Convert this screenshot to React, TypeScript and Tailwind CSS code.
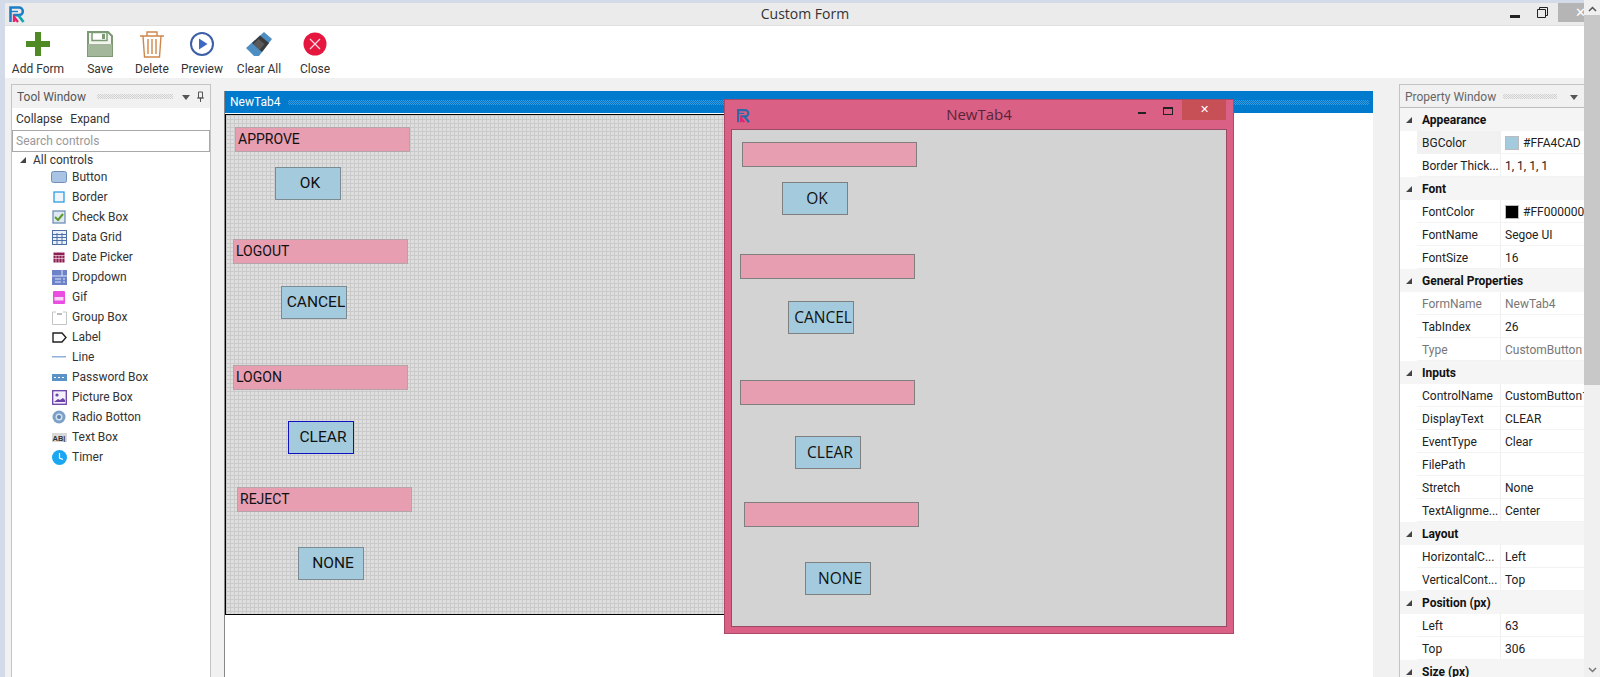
import React from "react";

function Logo({ size = 18, dark }: { size?: number; dark?: boolean }) {
  const blue = dark ? "#2a6aa8" : "#1e7fc6";
  return (
    <svg width={size} height={size} viewBox="0 0 18 18" fill="none" className="shrink-0">
      <path d="M2.500 17V2.500h8.500a3.800 3.800 0 0 1 0 7.600H5.500" stroke={blue} strokeWidth="2.600" />
      <path d="M2 6.500h8" stroke={blue} strokeWidth="1.400" />
      <path d="M6 17v-5l4 5" stroke="#e8236e" strokeWidth="2.400" />
      <path d="M10.500 10.500l5 6.500" stroke={dark ? "#2a6aa8" : "#14a5ad"} strokeWidth="2.800" />
    </svg>
  );
}

function ToolButton({ label, children, w }: { label: string; children: React.ReactNode; w: string }) {
  return (
    <div className={`flex flex-col items-center ${w}`}>
      <div className="h-[32px] flex items-center justify-center">{children}</div>
      <span className="text-[12px] leading-[16px] text-[#333] mt-[1px] whitespace-nowrap font-['Roboto',sans-serif]">{label}</span>
    </div>
  );
}

const controls: [string, React.ReactNode][] = [
  ["Button", <svg width="16" height="14" viewBox="0 0 16 14"><rect x="0.5" y="1.5" width="15" height="11" rx="2" fill="#a9c3e4" stroke="#6f8fb5" /></svg>],
  ["Border", <svg width="14" height="14" viewBox="0 0 14 14"><rect x="2" y="2" width="10" height="10" fill="#eef6fc" stroke="#2f9be8" strokeWidth="1.3" /></svg>],
  ["Check Box", <svg width="14" height="14" viewBox="0 0 14 14"><rect x="1" y="1" width="12" height="12" fill="#dfe8f2" stroke="#6f8fb5" strokeWidth="1.3" /><path d="M3 7l3 3 5-6" stroke="#5b9a2a" strokeWidth="2" fill="none" /></svg>],
  ["Data Grid", <svg width="15" height="15" viewBox="0 0 15 15"><rect x="0.5" y="0.5" width="14" height="14" fill="#eaf0f8" stroke="#4d6fa8" /><path d="M0 4.5h15M0 7.5h15M0 10.5h15M5 3v12M10 3v12" stroke="#4d6fa8" strokeWidth="1" /></svg>],
  ["Date Picker", <svg width="12" height="12" viewBox="0 0 12 12"><rect x="0.5" y="1.5" width="11" height="10" fill="#8c1f52" /><path d="M0 4.5h12M3 4v8M6 4v8M9 4v8M0 7.5h12M3 0v2M9 0v2" stroke="#f3d6e2" strokeWidth="0.7" /></svg>],
  ["Dropdown", <svg width="15" height="15" viewBox="0 0 15 15"><rect width="15" height="15" fill="#6d83c9" /><path d="M10 0v6M0 6h15M3 9h6M3 12h6M11 9h2M11 12h2" stroke="#dfe6f8" strokeWidth="1" /></svg>],
  ["Gif", <svg width="12" height="13" viewBox="0 0 12 13"><rect width="12" height="13" rx="1" fill="#ea4ee0" /><rect x="1.500" y="6" width="9" height="3.500" fill="#fbd5f7" /></svg>],
  ["Group Box", <svg width="15" height="15" viewBox="0 0 15 15" fill="none"><path d="M4 2H0.5v12.5h14V2H11" stroke="#c4c4c4" /><path d="M5 4h5" stroke="#aaa" strokeWidth="1.6" /></svg>],
  ["Label", <svg width="15" height="11" viewBox="0 0 15 11" fill="none"><path d="M1 1h9l4 4.500-4 4.500H1z" stroke="#222" strokeWidth="1.4" /></svg>],
  ["Line", <svg width="14" height="2" viewBox="0 0 14 2"><rect width="14" height="1.500" fill="#8fb0da" /></svg>],
  ["Password Box", <svg width="15" height="7" viewBox="0 0 15 7"><rect width="15" height="7" fill="#5c93c7" /><path d="M2 3.500h2M6 3.500h2M10 3.500h2" stroke="#fff" /></svg>],
  ["Picture Box", <svg width="15" height="15" viewBox="0 0 15 15"><rect x="0.7" y="0.700" width="13.6" height="13.6" fill="#f3f0fa" stroke="#6a42a8" strokeWidth="1.3" /><circle cx="5" cy="5" r="1.600" fill="#6a42a8" /><path d="M2 12l4-3 2 1 3-2 2 2v2z" fill="#6a42a8" /></svg>],
  ["Radio Botton", <svg width="14" height="14" viewBox="0 0 14 14"><circle cx="7" cy="7" r="6.500" fill="#7ba1c8" /><circle cx="7" cy="7" r="3.500" fill="#d3e0ee" /><circle cx="7" cy="7" r="2" fill="#5d86b3" /></svg>],
  ["Text Box", <svg width="15" height="9" viewBox="0 0 15 9"><rect width="15" height="9" fill="#d8d8d8" /><text x="0.500" y="7.500" fontSize="7.500" fontWeight="700" fill="#333" fontFamily="'Liberation Sans', sans-serif">AB|</text></svg>],
  ["Timer", <svg width="15" height="15" viewBox="0 0 15 15"><circle cx="7.500" cy="7.500" r="7.500" fill="#1aa7f2" /><path d="M7.500 3v5l3.500 1.500" stroke="#fff" strokeWidth="1.200" fill="none" /></svg>],
];

type Row = { cat?: boolean; n: string; v?: string; swatch?: string; dim?: boolean; sel?: boolean };
const rows: Row[] = [
  { cat: true, n: "Appearance" },
  { n: "BGColor", v: "#FFA4CAD", swatch: "#a4cadd", sel: true },
  { n: "Border Thick...", v: "1, 1, 1, 1" },
  { cat: true, n: "Font" },
  { n: "FontColor", v: "#FF000000", swatch: "#000000" },
  { n: "FontName", v: "Segoe UI" },
  { n: "FontSize", v: "16" },
  { cat: true, n: "General Properties" },
  { n: "FormName", v: "NewTab4", dim: true },
  { n: "TabIndex", v: "26" },
  { n: "Type", v: "CustomButton", dim: true },
  { cat: true, n: "Inputs" },
  { n: "ControlName", v: "CustomButton1" },
  { n: "DisplayText", v: "CLEAR" },
  { n: "EventType", v: "Clear" },
  { n: "FilePath", v: "" },
  { n: "Stretch", v: "None" },
  { n: "TextAlignme...", v: "Center" },
  { cat: true, n: "Layout" },
  { n: "HorizontalC...", v: "Left" },
  { n: "VerticalCont...", v: "Top" },
  { cat: true, n: "Position (px)" },
  { n: "Left", v: "63" },
  { n: "Top", v: "306" },
  { cat: true, n: "Size (px)" },
];

function Triangle() {
  return <svg width="8" height="8" viewBox="0 0 8 8" className="shrink-0"><path d="M7 1v6H1z" fill="#444" /></svg>;
}

function Dots({ className }: { className: string }) {
  return <div className={`h-[5px] bg-[conic-gradient(#cfcfcf_25%,transparent_0_50%,#cfcfcf_0_75%,transparent_0)] bg-[size:2px_2px] ${className}`} />;
}

function Field({ x, y, w, h, kind, text, outlined, solid }: { x: number; y: number; w: number; h: number; kind: "label" | "btn"; text: string; outlined?: boolean; solid?: boolean }) {
  const base = kind === "label"
    ? "bg-[#e79eb1] text-[14px] pl-[2px] justify-start"
    : "bg-[#a4cadd] text-[15.5px] pl-[4px] justify-center";
  const border = outlined ? "border-[#1010c0]" : solid ? "border-[#7f7f7f]" : kind === "btn" ? "border-[#7b8b94]" : "border-[#b5a4a9]";
  return (
    <div className={`absolute flex items-center border text-[#111] overflow-hidden whitespace-nowrap ${base} ${border}`} style={{ left: x, top: y, width: w, height: h }}>
      {text}
    </div>
  );
}

const canvasItems = [
  { x: 9, y: 12, w: 175, h: 25, kind: "label" as const, text: "APPROVE" },
  { x: 49, y: 52, w: 66, h: 33, kind: "btn" as const, text: "OK" },
  { x: 7, y: 124, w: 175, h: 25, kind: "label" as const, text: "LOGOUT" },
  { x: 55, y: 171, w: 66, h: 33, kind: "btn" as const, text: "CANCEL" },
  { x: 7, y: 250, w: 175, h: 25, kind: "label" as const, text: "LOGON" },
  { x: 62, y: 306, w: 66, h: 33, kind: "btn" as const, text: "CLEAR", outlined: true },
  { x: 11, y: 372, w: 175, h: 25, kind: "label" as const, text: "REJECT" },
  { x: 72, y: 432, w: 66, h: 33, kind: "btn" as const, text: "NONE" },
];

export default function App() {
  return (
    <div className="w-[1600px] h-[677px] overflow-hidden flex bg-[#d3dbe9] text-[#222] font-['Open_Sans',sans-serif]">
      <div className="flex-1 min-w-0 flex flex-col pl-[5px] pt-[3px]">
        {/* title bar */}
        <div className="h-[22px] bg-[#ebebeb] flex items-center relative shrink-0">
          <div className="pl-[3px] flex"><Logo /></div>
          <div className="absolute left-[695px] w-[210px] text-center text-[14px] text-[#333] leading-[22px]">Custom Form</div>
          <div className="ml-auto flex items-center h-full">
            <div className="w-[10px] h-[3px] bg-[#222] mt-[5px] mr-[17px]" />
            <svg width="11" height="11" viewBox="0 0 11 11" fill="none" className="mr-[10px] mb-[3px]"><path d="M0.500 2.500h8v8h-8zM2.500 2V0.500h8v8H9" stroke="#222" /></svg>
            <div className="w-[26px] h-[19px] self-start bg-[#b5b5b5] flex justify-end items-center overflow-hidden"><span className="text-white text-[13px] mr-[-2px]">✕</span></div>
          </div>
        </div>
        {/* toolbar */}
        <div className="h-[53px] bg-white flex items-start pt-[2px] pl-[7px] shrink-0 border-t border-[#e0e0e0]">
          <ToolButton label="Add Form" w="w-[52px]">
            <svg width="26" height="26" viewBox="0 0 26 26"><path d="M10 1h6v9h9v6h-9v9h-6v-9H1v-6h9z" fill="#4f8a24" /></svg>
          </ToolButton>
          <div className="w-[18px]" />
          <ToolButton label="Save" w="w-[36px]">
            <svg width="26" height="26" viewBox="0 0 26 26" fill="none"><path d="M1 1h20l4 4v20H1z" fill="#f2f5ee" stroke="#7c9a74" strokeWidth="2" /><rect x="5" y="1.500" width="15" height="8" fill="#fff" stroke="#7c9a74" strokeWidth="1.500" /><rect x="15" y="3" width="3" height="5" fill="#7c9a74" /><rect x="1" y="13" width="24" height="12" fill="#a3b89b" /></svg>
          </ToolButton>
          <div className="w-[16px]" />
          <ToolButton label="Delete" w="w-[36px]">
            <svg width="26" height="27" viewBox="0 0 26 27" fill="none" stroke="#d0874b" strokeWidth="1.400"><path d="M1 5h24M8 5V1h10v4M4 5l1.500 21h15L22 5" /><path d="M9 8v15M13 8v15M17 8v15" /></svg>
          </ToolButton>
          <div className="w-[14px]" />
          <ToolButton label="Preview" w="w-[36px]">
            <svg width="24" height="24" viewBox="0 0 24 24"><circle cx="12" cy="12" r="11" fill="#fff" stroke="#3d5fa8" strokeWidth="2" /><path d="M9 6.500l8.500 5.500L9 17.500z" fill="#3d68c4" /></svg>
          </ToolButton>
          <div className="w-[17px]" />
          <ToolButton label="Clear All" w="w-[44px]">
            <svg width="28" height="26" viewBox="0 0 28 26"><path d="M19 1l8 7-13 17-5 0-8-8z" fill="#4f8ec2" /><path d="M15 4.500l9 7.500-7 9-10-9z" fill="#3a3a3a" /><path d="M13.500 8l6 5-5 6-6-6z" fill="#5a5a5a" /></svg>
          </ToolButton>
          <div className="w-[17px]" />
          <ToolButton label="Close" w="w-[34px]">
            <svg width="24" height="24" viewBox="0 0 24 24"><circle cx="12" cy="12" r="11.500" fill="#e5173f" /><path d="M7 7l10 10M17 7L7 17" stroke="#fbd5dd" strokeWidth="1.300" /></svg>
          </ToolButton>
        </div>
        {/* body */}
        <div className="flex-1 min-h-0 flex bg-[#f1f1f1] font-['Roboto',sans-serif]">
          {/* tool window */}
          <div className="w-[200px] ml-[6px] mt-[6px] shrink-0 flex flex-col border-x border-[#c4c4c4] border-t bg-white">
            <div className="h-[23px] bg-[#f1f1f1] flex items-center pl-[5px] pr-[4px] text-[12px] text-[#555] shrink-0">
              <span className="whitespace-nowrap w-[72px]">Tool Window</span>
              <Dots className="w-[76px] ml-[8px]" />
              <svg width="8" height="5" viewBox="0 0 8 5" className="ml-[9px] mt-[2px]"><path d="M0 0h8L4 5z" fill="#555" /></svg>
              <svg width="9" height="12" viewBox="0 0 9 12" fill="none" className="ml-[6px]"><path d="M2.500 1h4v6h-4zM1 7h7M4.500 7v4" stroke="#555" /></svg>
            </div>
            <div className="h-[22px] flex items-center pl-[4px] gap-[8px] text-[12px] text-[#333] shrink-0">
              <span>Collapse</span><span>Expand</span>
            </div>
            <div className="h-[22px] border border-[#a8a8a8] flex items-center pl-[3px] text-[12px] text-[#999] shrink-0">Search controls</div>
            <div className="flex items-center h-[15px] pt-[1px] shrink-0 text-[12px] text-[#333] pl-[7px] gap-[6px]"><Triangle /><span>All controls</span></div>
            {controls.map(([name, icon]) => (
              <div key={name} className="h-[20px] flex items-center shrink-0 text-[12px] text-[#333]">
                <div className="w-[18px] ml-[38px] flex justify-center">{icon}</div>
                <span className="ml-[4px] whitespace-nowrap">{name}</span>
              </div>
            ))}
          </div>
          {/* center */}
          <div className="w-[1149px] ml-[13px] mt-[13px] shrink-0 flex flex-col bg-white border-l border-[#888] relative">
            <div className="h-[22px] bg-[#007acc] flex items-center pl-[5px] pr-[4px] text-[12px] text-white shrink-0">
              <span className="whitespace-nowrap">NewTab4</span>
              <div className="flex-1 ml-[8px] h-[5px] bg-[conic-gradient(#3a9ad9_25%,transparent_0_50%,#3a9ad9_0_75%,transparent_0)] bg-[size:2px_2px]" />
            </div>
            <div className="relative w-[800px] h-[501px] mt-[1px] border border-black bg-[#dedede] bg-[linear-gradient(#cacaca_1px,transparent_1px),linear-gradient(90deg,#cacaca_1px,transparent_1px)] bg-[size:4px_4px] shrink-0">
              {canvasItems.map((i) => <Field key={i.text} {...i} />)}
            </div>
            {/* preview dialog */}
            <div className="absolute left-[499px] top-[8px] w-[510px] h-[535px] bg-[#da6085] border border-[#a94a68] flex flex-col px-[6px] pb-[6px]">
              <div className="h-[29px] relative flex items-center shrink-0">
                <div className="pl-[5px] pt-[2px]"><Logo size={15} dark /></div>
                <div className="absolute inset-x-0 text-center text-[15px] text-[#5a2438] font-['Open_Sans',sans-serif]">NewTab4</div>
                <div className="absolute right-[1px] top-0 flex items-start">
                  <div className="w-[8px] h-[2px] bg-[#222] mt-[12px] mr-[17px]" />
                  <div className="w-[10px] h-[8px] border border-[#222] border-t-2 mt-[7px] mr-[9px]" />
                  <div className="w-[44px] h-[20px] bg-[#c75056] flex items-center justify-center text-white text-[11px]">✕</div>
                </div>
              </div>
              <div className="flex-1 relative bg-[#d3d3d3] border border-[#9a4a64] font-['Open_Sans',sans-serif]">
                <Field solid x={10} y={12} w={175} h={25} kind="label" text="" />
                <Field solid x={50} y={52} w={66} h={33} kind="btn" text="OK" />
                <Field solid x={8} y={124} w={175} h={25} kind="label" text="" />
                <Field solid x={56} y={171} w={66} h={33} kind="btn" text="CANCEL" />
                <Field solid x={8} y={250} w={175} h={25} kind="label" text="" />
                <Field solid x={63} y={306} w={66} h={33} kind="btn" text="CLEAR" />
                <Field solid x={12} y={372} w={175} h={25} kind="label" text="" />
                <Field solid x={73} y={432} w={66} h={33} kind="btn" text="NONE" />
              </div>
            </div>
          </div>
          {/* property window */}
          <div className="flex-1 min-w-0 ml-[26px] mt-[6px] flex flex-col border-l border-t border-[#c4c4c4] bg-white overflow-hidden text-[12px]">
            <div className="h-[23px] bg-[#f1f1f1] border-b border-[#bdbdbd] flex items-center pl-[5px] pt-[1px] text-[12px] text-[#666] shrink-0">
              <span className="whitespace-nowrap w-[90px]">Property Window</span>
              <Dots className="w-[54px] ml-[8px]" />
              <svg width="8" height="5" viewBox="0 0 8 5" className="ml-[13px] mt-[2px]"><path d="M0 0h8L4 5z" fill="#555" /></svg>
            </div>
            {rows.map((r) =>
              r.cat ? (
                <div key={r.n} className="h-[23px] bg-[#f5f5f5] flex items-center pl-[5px] pt-[1px] gap-[9px] font-bold text-[#111] shrink-0 whitespace-nowrap">
                  <Triangle /><span>{r.n}</span>
                </div>
              ) : (
                <div key={r.n} className={`h-[23px] ml-[17px] flex items-center shrink-0 border-b border-[#f3f3f3] whitespace-nowrap ${r.dim ? "text-[#777]" : "text-[#222]"}`}>
                  <div className={`w-[84px] h-full flex items-center pl-[5px] pt-[1px] border-r border-[#f0f0f0] overflow-hidden ${r.sel ? "bg-[#f1f1f1]" : ""}`}>{r.n}</div>
                  <div className="flex-1 min-w-0 flex items-center pl-[4px] pt-[1px] overflow-hidden">
                    {r.swatch && <span className="w-[14px] h-[14px] mr-[4px] shrink-0 border border-[#bbb]" style={{ backgroundColor: r.swatch }} />}
                    {r.v}
                  </div>
                </div>
              )
            )}
          </div>
        </div>
      </div>
      {/* scrollbar */}
      <div className="w-[16px] shrink-0 flex flex-col bg-[#f0f0f0]">
        <div className="h-[15px] flex items-center justify-center pt-[3px]">
          <svg width="9" height="6" viewBox="0 0 9 6" fill="none"><path d="M1 5l3.500-3.500L8 5" stroke="#555" strokeWidth="1.500" /></svg>
        </div>
        <div className="h-[370px] bg-[#c8c8c8]" />
        <div className="flex-1" />
        <div className="h-[15px] flex items-center justify-center">
          <svg width="9" height="6" viewBox="0 0 9 6" fill="none"><path d="M1 1l3.500 3.500L8 1" stroke="#777" strokeWidth="1.500" /></svg>
        </div>
      </div>
    </div>
  );
}
